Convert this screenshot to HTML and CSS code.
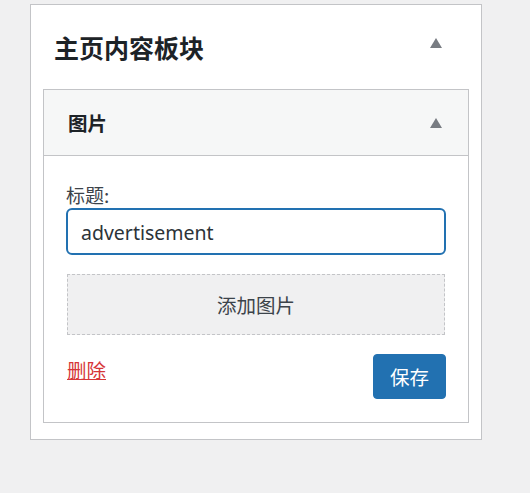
FILE: index.html
```html
<!DOCTYPE html>
<html lang="zh-CN">
<head>
<meta charset="utf-8">
<title>主页内容板块</title>
<link rel="stylesheet" href="styles.css">
</head>
<body>
<div class="panel">
  <div class="panel-head">
    <h2 class="panel-title">主页内容板块</h2>
    <span class="toggle toggle-main"></span>
  </div>
  <div class="panel-body">
    <div class="widget">
      <div class="widget-head">
        <h3 class="widget-title">图片</h3>
        <span class="toggle"></span>
      </div>
      <div class="widget-inside">
        <label class="field-label" for="t">标题:</label>
        <input class="field-input" id="t" type="text" value="advertisement">
        <div class="add-image">添加图片</div>
        <div class="actions">
          <a class="delete" href="#">删除</a>
          <button class="save" type="button">保存</button>
        </div>
      </div>
    </div>
  </div>
</div>
</body>
</html>
```
FILE: styles.css
```css
* { box-sizing: border-box; }
html, body { margin: 0; padding: 0; }
body {
  background: #f0f0f1;
  font-family: "Noto Sans", "Noto Sans CJK SC", sans-serif;
  color: #3c434a;
  padding: 4px 0 0 30px;
}
.panel {
  width: 452px;
  background: #fff;
  border: 1px solid #c3c4c7;
}
.panel-head {
  height: 84px;
  display: flex;
  align-items: center;
  justify-content: space-between;
  padding: 0 39px 0 23px;
}
.panel-title {
  margin: 0;
  font-size: 25px;
  font-weight: 700;
  color: #1d2327;
  font-family: "Noto Sans CJK SC", sans-serif;
  line-height: 1;
}
.toggle {
  width: 0;
  height: 0;
  border-left: 6px solid transparent;
  border-right: 6px solid transparent;
  border-bottom: 10px solid #787c82;
}
.toggle-main {
  margin-bottom: 8px;
}
.panel-body {
  padding: 0 12px 16px;
}
.widget {
  border: 1px solid #c3c4c7;
  background: #fff;
}
.widget-head {
  height: 66px;
  background: #f6f7f7;
  border-bottom: 1px solid #c3c4c7;
  display: flex;
  align-items: center;
  justify-content: space-between;
  padding: 0 26px 0 24px;
}
.widget-title {
  margin: 0;
  font-size: 19.5px;
  font-weight: 700;
  color: #1d2327;
  font-family: "Noto Sans CJK SC", sans-serif;
  line-height: 1;
}
.widget-inside {
  padding: 25px 22px 23px;
  display: flex;
  flex-direction: column;
}
.field-label {
  font-family: "Noto Sans CJK SC", sans-serif;
  font-size: 19px;
  line-height: 27px;
  height: 27px;
  color: #3c434a;
}
.field-input {
  height: 47px;
  width: 100%;
  border: 2px solid #2271b1;
  border-radius: 6px;
  padding: 2px 13px 0;
  font-family: "Noto Sans", sans-serif;
  font-size: 19.5px;
  color: #2c3338;
  background: #fff;
  outline: none;
  margin: 0;
}
.add-image {
  margin: 19px 1px 0;
  height: 61px;
  border: 1px dashed #c3c4c7;
  background: #f0f0f1;
  display: flex;
  align-items: center;
  justify-content: center;
  font-family: "Noto Sans CJK SC", sans-serif;
  font-size: 19.5px;
  color: #3c434a;
}
.actions {
  margin: 19px 0 0 1px;
  display: flex;
  justify-content: space-between;
  align-items: flex-start;
}
.delete {
  margin-top: 2px;
  font-family: "Noto Sans CJK SC", sans-serif;
  font-size: 19.5px;
  line-height: 27px;
  color: #d63638;
  text-decoration: underline;
}
.save {
  width: 73px;
  height: 45px;
  background: #2271b1;
  border: 1px solid #2271b1;
  border-radius: 4px;
  color: #fff;
  font-family: "Noto Sans CJK SC", sans-serif;
  font-size: 19.5px;
  padding: 0;
  margin: 0;
}
```
